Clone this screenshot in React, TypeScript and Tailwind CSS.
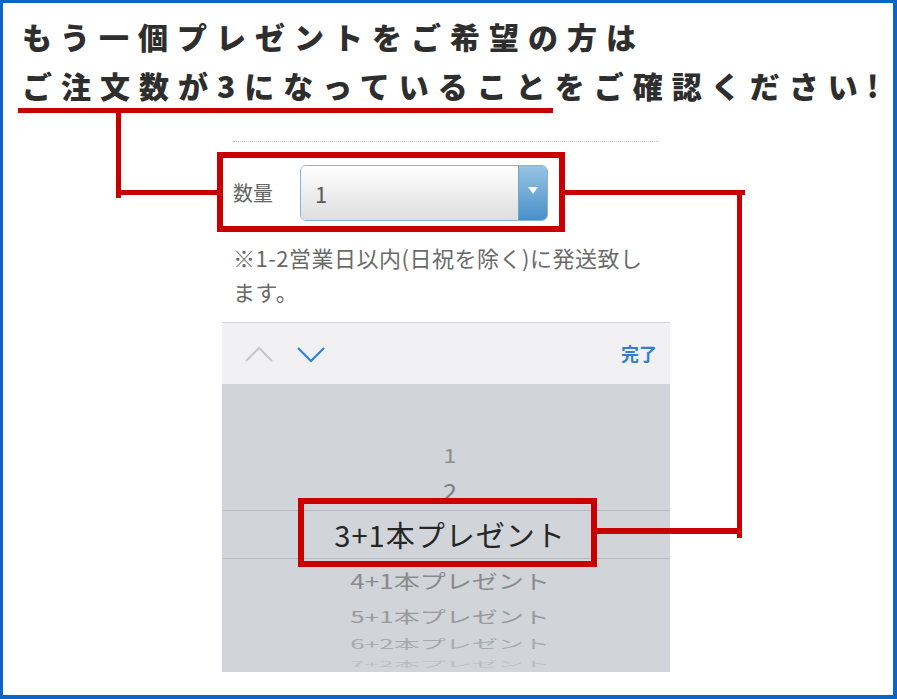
import React from 'react'

// red annotation strokes laid over the screenshot
function Annotations() {
  return (
    <div className="pointer-events-none absolute inset-0">
      {/* underline under the headline */}
      <div className="absolute left-[15px] top-[105px] h-[5px] w-[535px] bg-[#c90000]" />
      <div className="absolute left-[113px] top-[105px] h-[90px] w-[5px] bg-[#c90000]" />
      <div className="absolute left-[113px] top-[187px] h-[5px] w-[106px] bg-[#c90000]" />
      {/* box round the quantity select */}
      <div className="absolute left-[214px] top-[149px] h-[80px] w-[348px] border-[6px] border-[#c90000]" />
      <div className="absolute left-[562px] top-[187px] h-[5px] w-[180px] bg-[#c90000]" />
      <div className="absolute left-[734px] top-[187px] h-[348px] w-[5px] bg-[#c90000]" />
      <div className="absolute left-[594px] top-[525px] h-[6px] w-[145px] bg-[#c90000]" />
      {/* box round the picked row */}
      <div className="absolute left-[295px] top-[495px] h-[69px] w-[299px] border-[6px] border-[#c90000]" />
    </div>
  )
}

function QuantitySelect() {
  return (
    <div className="ml-[27px] flex h-[56px] w-[248px] overflow-hidden rounded-[6px] border border-[#86b3d6]">
      <div className="flex flex-1 items-center bg-linear-to-b from-white to-[#dedede] pl-[14px] text-[22px] text-[#5a5a5a]">
        1
      </div>
      <div className="flex w-[29px] items-center justify-center border-l border-[#6fa5cd] bg-linear-to-b from-[#98c4e4] to-[#4790c9]">
        <div className="-mt-[6px] h-0 w-0 border-x-[5px] border-t-[7px] border-x-transparent border-t-white" />
      </div>
    </div>
  )
}

function Toolbar() {
  return (
    <div className="flex h-[62px] items-center border-t border-[#d4d4d7] bg-[#f1f1f3] pl-[22px] pr-[13px]">
      <svg width="30" height="18" viewBox="0 0 30 18">
        <path d="M2 16 L15 3 L28 16" stroke="#c9c9cd" strokeWidth="2" fill="none" />
      </svg>
      <svg className="ml-[22px]" width="30" height="18" viewBox="0 0 30 18">
        <path d="M2 3 L15 16 L28 3" stroke="#2f80de" strokeWidth="2.2" fill="none" />
      </svg>
      <span className="ml-auto text-[18px] font-bold text-[#2f7ed8]">完了</span>
    </div>
  )
}

function Picker() {
  return (
    <div className="h-[288px] overflow-hidden bg-[#d1d4d9] pl-[8px] pt-[56px]">
      <div className="flex h-[30px] items-center justify-center">
        <span className="scale-y-[0.8] text-[24px] leading-none text-[#8e8e90]">1</span>
      </div>
      <div className="flex h-[40px] items-center justify-center">
        <span className="scale-y-[0.9] text-[25px] leading-none text-[#7e7e80]">2</span>
      </div>
      <div className="-ml-[8px] flex h-[49px] items-center justify-center border-y border-[#b7bac0] pl-[8px]">
        <span className="text-[29px] leading-none tracking-[1px] text-[#262626]">3+1本プレゼント</span>
      </div>
      <div className="flex h-[44px] items-center justify-center">
        <span className="scale-y-[0.75] text-[26px] leading-none text-[#8a8a8d]">4+1本プレゼント</span>
      </div>
      <div className="flex h-[26px] items-center justify-center">
        <span className="scale-y-[0.62] text-[26px] leading-none text-[#99999c]">5+1本プレゼント</span>
      </div>
      <div className="flex h-[30px] items-center justify-center">
        <span className="scale-y-[0.48] text-[26px] leading-none text-[#a9a9ac]">6+2本プレゼント</span>
      </div>
      <div className="flex h-[10px] items-start justify-center overflow-hidden">
        <span className="-mt-[8px] scale-y-[0.3] text-[26px] leading-none text-[#bdbdc0]">7+2本プレゼント</span>
      </div>
    </div>
  )
}

export default function App() {
  return (
    <div className="relative h-[699px] w-[897px] overflow-hidden border-t-[3px] border-r-[4px] border-b-[4px] border-l-[3px] border-[#0b64c9] bg-white font-['Noto_Sans_CJK_JP',sans-serif]">
      {/* headline */}
      <div className="pl-[19px] pt-[9px] text-[30px] font-black leading-[49px] tracking-[9px] whitespace-nowrap text-[#2e2e2e]">
        <p>もう一個プレゼントをご希望の方は</p>
        <p>ご注文数が3になっていることをご確認ください!</p>
      </div>

      {/* phone screenshot column */}
      <div className="ml-[219px] mt-[31px] w-[448px]">
        <div className="mx-[11px] border-t border-dotted border-[#c4c4c4]" />

        <div className="mt-[23px] flex h-[56px] items-center pl-[11px]">
          <span className="w-[40px] text-[20px] text-[#666]">数量</span>
          <QuantitySelect />
        </div>

        <p className="mt-[19px] px-[11px] text-[22px] leading-[34px] tracking-[0.5px] whitespace-nowrap text-[#6a6a6a]">
          ※1-2営業日以内(日祝を除く)に発送致し
          <br />
          ます。
        </p>

        <div className="mt-[14px]">
          <Toolbar />
          <Picker />
        </div>
      </div>

      <Annotations />
    </div>
  )
}
